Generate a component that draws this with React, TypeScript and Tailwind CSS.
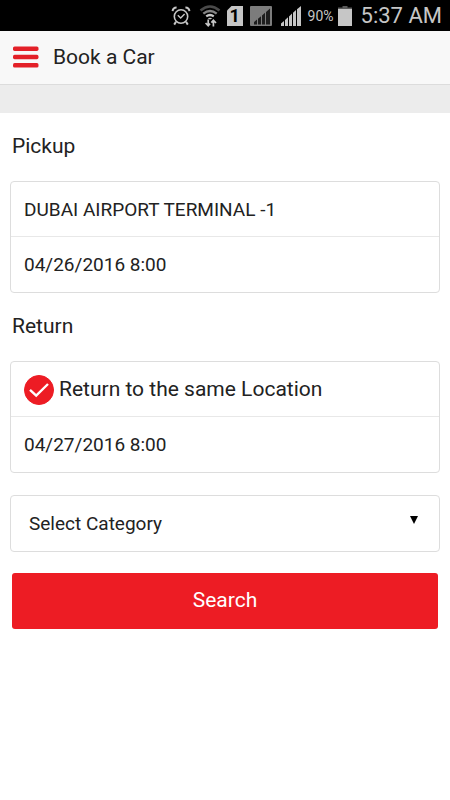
import React, { useState } from 'react';

const StatusBar: React.FC = () => {
  return (
    <div className="h-[31px] bg-black flex items-center justify-end pr-2 text-[#c6c6c6]">
      <svg className="w-5 h-5 mr-[7px]" viewBox="0 0 20 20" fill="none" stroke="currentColor" aria-hidden="true">
        <circle cx="10" cy="10.5" r="6.7" strokeWidth="1.6" />
        <path d="M6.8 9.2 L9.7 12 L13.6 8" strokeWidth="1.4" />
        <path d="M1.6 5.2 A4 4 0 0 1 5.6 1.6 M14.4 1.6 A4 4 0 0 1 18.4 5.2" strokeWidth="2" />
        <path d="M5 15.8 L3.2 18.6 M15 15.8 L16.8 18.6" strokeWidth="2" />
      </svg>
      <svg className="w-6 h-6 mr-[5px]" viewBox="0 0 24 24" fill="none" stroke="currentColor" aria-hidden="true">
        <path d="M2.5 6.5 Q12 -1.5 21.5 6.5" stroke="#4a4a4a" strokeWidth="2.6" />
        <path d="M5.3 9.6 Q12 4.2 18.7 9.6" stroke="#858585" strokeWidth="2.4" />
        <path d="M8.2 12.4 Q12 9.6 15.8 12.4" strokeWidth="2.2" />
        <path d="M9.8 14.4 Q12 13 14.2 14.4 L12 15.6 Z" fill="currentColor" stroke="none" />
        <path d="M10.2 15.6 V21.4 M7.6 19 L10.2 21.8 L12 19.6 M15.4 22.4 V16.4 M13.4 18.6 L15.4 16.2 L18 19" strokeWidth="1.7" />
      </svg>
      <span className="relative w-4 h-5 mr-[7px]">
        <svg className="w-4 h-5" viewBox="0 0 16 20" aria-hidden="true">
          <path d="M4.5 0 H16 V20 H0 V4.5 Z" fill="currentColor" />
        </svg>
        <span className="absolute inset-0 text-center text-lg leading-5 font-bold text-black">1</span>
      </span>
      <svg className="w-[22px] h-5 mr-[9px]" viewBox="0 0 22 20" aria-hidden="true">
        <rect width="22" height="20" rx="1" fill="#7c7c7c" />
        <path d="M4 18.5 V16 L7 13.6 V18.5 Z M8 18.5 V12.8 L11 10.2 V18.5 Z M12 18.5 V9.4 L15 6.8 V18.5 Z M16 18.5 V6 L20 2.6 V18.5 Z" fill="#1d1d1d" />
      </svg>
      <svg className="w-5 h-5 mr-[7px]" viewBox="0 0 20 20" fill="currentColor" aria-hidden="true">
        <path d="M0 20 V17.5 L3 15 V20 Z M4 20 V14 L7 11.2 V20 Z M8 20 V10.4 L11 7.6 V20 Z M12 20 V6.8 L15 4 V20 Z M16 20 V3.2 L20 0 V20 Z" />
      </svg>
      <span className="text-sm mr-1">90%</span>
      <svg className="w-[14px] h-5 mr-[9px]" viewBox="0 0 14 20" aria-hidden="true">
        <path d="M4.5 0 H9.5 V1.5 H14 V4 H0 V1.5 H4.5 Z" fill="#5a5a5a" />
        <rect y="3" width="14" height="17" fill="currentColor" />
      </svg>
      <span className="text-[22px] leading-7">5:37 AM</span>
    </div>
  );
};

const Header: React.FC = () => {
  return (
    <header className="h-[54px] bg-[#f8f8f8] border-b border-[#dcdcdc] flex items-center px-3 pb-0.5">
      <button type="button" aria-label="Menu" className="pl-px mr-3.5">
        <svg className="w-[26px] h-[22px]" viewBox="0 0 26 22" fill="#e32028" aria-hidden="true">
          <rect y="0.5" width="25.5" height="4.4" rx="1.6" />
          <rect y="8.8" width="25.5" height="4.4" rx="1.6" />
          <rect y="17.1" width="25.5" height="4.4" rx="1.6" />
        </svg>
      </button>
      <h1 className="text-[21px] leading-7">Book a Car</h1>
    </header>
  );
};

interface TextFieldProps {
  label: string;
  value: string;
  onChange: (value: string) => void;
}

const TextField: React.FC<TextFieldProps> = ({ label, value, onChange }) => {
  return (
    <input
      type="text"
      aria-label={label}
      value={value}
      onChange={(e) => onChange(e.target.value)}
      className="block w-full h-[55px] px-[13px] text-[19px] bg-transparent outline-none"
    />
  );
};

export default function App() {
  const [location, setLocation] = useState('DUBAI AIRPORT TERMINAL -1');
  const [pickupDate, setPickupDate] = useState('04/26/2016 8:00');
  const [returnDate, setReturnDate] = useState('04/27/2016 8:00');
  const [sameLocation, setSameLocation] = useState(true);
  const [category, setCategory] = useState('');

  return (
    <div className="min-h-screen bg-white text-[#222222] font-[Roboto,sans-serif]">
      <StatusBar />
      <Header />
      <div className="h-7 bg-[#ececec]" />

      <form className="px-2.5" onSubmit={(e) => e.preventDefault()}>
        <h2 className="px-0.5 pt-[19px] pb-[21px] text-[21px] leading-7">Pickup</h2>
        <div className="border border-[#dddddd] rounded divide-y divide-[#e8e8e8]">
          <TextField label="Pickup location" value={location} onChange={setLocation} />
          <TextField label="Pickup date" value={pickupDate} onChange={setPickupDate} />
        </div>

        <h2 className="px-0.5 pt-[19px] pb-[21px] text-[21px] leading-7">Return</h2>
        <div className="border border-[#dddddd] rounded divide-y divide-[#e8e8e8]">
          <label className="flex items-center h-[55px] px-[13px] pt-0.5 text-[21px]">
            <span className="relative w-[30px] h-[30px] mr-[5px]">
              <input
                type="checkbox"
                checked={sameLocation}
                onChange={(e) => setSameLocation(e.target.checked)}
                className="peer block appearance-none w-[30px] h-[30px] rounded-full border border-[#dddddd] checked:border-[#ed1c24] checked:bg-[#ed1c24]"
              />
              <svg
                className="absolute inset-0 w-[30px] h-[30px] pointer-events-none opacity-0 peer-checked:opacity-100"
                viewBox="0 0 30 30"
                fill="none"
                stroke="white"
                strokeWidth="2.4"
                aria-hidden="true"
              >
                <path d="M6 14.8 L12.2 20.6 L24 9" />
              </svg>
            </span>
            Return to the same Location
          </label>
          <TextField label="Return date" value={returnDate} onChange={setReturnDate} />
        </div>

        <div className="relative mt-[22px]">
          <select
            aria-label="Category"
            value={category}
            onChange={(e) => setCategory(e.target.value)}
            className="block appearance-none w-full h-[57px] px-[18px] pt-0.5 text-[19px] bg-white border border-[#dddddd] rounded outline-none"
          >
            <option value="">Select Category</option>
          </select>
          <svg
            className="absolute right-[22px] top-[21px] w-2 h-2 pointer-events-none"
            viewBox="0 0 8 8"
            aria-hidden="true"
          >
            <path d="M0 0 H8 L4 8 Z" fill="black" />
          </svg>
        </div>

        <div className="px-0.5 pt-[21px]">
          <button
            type="submit"
            className="block w-full h-14 rounded-[3px] bg-[#ed1c24] text-white text-[21px]"
          >
            Search
          </button>
        </div>
      </form>
    </div>
  );
}
